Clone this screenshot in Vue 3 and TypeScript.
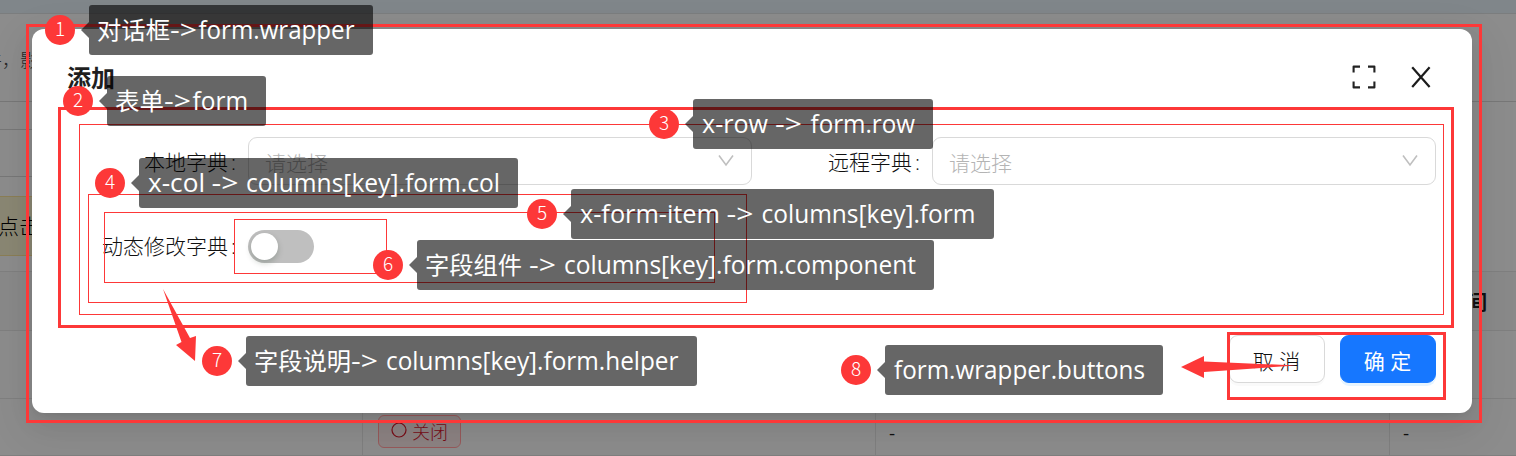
<script setup lang="ts">
interface Run {
  text: string
  x: number
  width: number
  cjk?: boolean
}
interface Callout {
  id: number
  x: number
  y: number
  width: number
  runs: Run[]
}
interface Frame {
  x: number
  y: number
  width: number
  height: number
  stroke: number
}

const frames: Frame[] = [
  { x: 26, y: 24, width: 1456, height: 399, stroke: 3 },
  { x: 58, y: 107, width: 1396, height: 221, stroke: 3 },
  { x: 79, y: 124, width: 1365, height: 191, stroke: 1 },
  { x: 88, y: 194, width: 659, height: 109, stroke: 1 },
  { x: 104, y: 212, width: 611, height: 71, stroke: 1 },
  { x: 234, y: 219, width: 153, height: 55, stroke: 1 },
  { x: 1227, y: 332, width: 219, height: 68, stroke: 3 },
]

const callouts: Callout[] = [
  { id: 1, x: 89, y: 5, width: 284, runs: [{ text: '对话框', x: 97, width: 73, cjk: true }, { text: '->', x: 170, width: 27 }, { text: 'form.wrapper', x: 198.5, width: 156 }] },
  { id: 2, x: 107, y: 76, width: 159, runs: [{ text: '表单', x: 115, width: 49, cjk: true }, { text: '->', x: 164, width: 27 }, { text: 'form', x: 192.5, width: 55.5 }] },
  { id: 3, x: 693, y: 99, width: 240, runs: [{ text: 'x-row', x: 702, width: 66 }, { text: '->', x: 775, width: 27 }, { text: 'form.row', x: 810.5, width: 104.5 }] },
  { id: 4, x: 139, y: 158, width: 379, runs: [{ text: 'x-col', x: 148, width: 57 }, { text: '->', x: 211.5, width: 27 }, { text: 'columns[key].form.col', x: 246, width: 254 }] },
  { id: 5, x: 571, y: 189, width: 423, runs: [{ text: 'x-form-item', x: 580, width: 140 }, { text: '->', x: 726.5, width: 27 }, { text: 'columns[key].form', x: 761.5, width: 214 }] },
  { id: 6, x: 417, y: 240, width: 517, runs: [{ text: '字段组件', x: 425, width: 97, cjk: true }, { text: '->', x: 529, width: 27 }, { text: 'columns[key].form.component', x: 564, width: 352 }] },
  { id: 7, x: 246, y: 336, width: 451, runs: [{ text: '字段说明', x: 254, width: 97, cjk: true }, { text: '->', x: 351, width: 27 }, { text: 'columns[key].form.helper', x: 386, width: 292.5 }] },
  { id: 8, x: 885, y: 345, width: 278, runs: [{ text: 'form.wrapper.buttons', x: 894, width: 251 }] },
]
</script>

<template>
  <div class="screen">
    <div class="page">
      <div class="topbar"></div>
      <div class="intro"><span>件，影响</span></div>
      <div class="band"></div>
      <div class="band tall"></div>
      <div class="notice-wrap"><div class="notice">点击</div></div>
      <div class="table-head"><b>时间</b></div>
      <div class="table-row blank"></div>
      <div class="table-row">
        <div class="cell first"></div>
        <div class="cell status">
          <span class="tag">
            <svg width="18" height="18" viewBox="0 0 18 18"><circle cx="9" cy="9" r="7" fill="none" stroke="currentColor" stroke-width="1.2" /></svg>
            <span>关闭</span>
          </span>
        </div>
        <div class="cell third">-</div>
        <div class="cell last">-</div>
      </div>
    </div>

    <div class="dialog">
      <header class="head">
        <h1>添加</h1>
        <div class="tools">
          <svg width="26" height="26" viewBox="0 0 26 26" fill="none" stroke="#222" stroke-width="2.1" stroke-linejoin="round">
            <path d="M2.6 8.600V2.6H9M17 2.6h6.4V8.600M2.6 17.4v6H9M17 23.4h6.4v-6" />
          </svg>
          <svg width="22" height="24" viewBox="0 0 22 24" fill="none" stroke="#1c1c1c" stroke-width="2.2">
            <path d="M2.2 2.2 19.6 22M19.6 2.2 2.2 22" />
          </svg>
        </div>
      </header>
      <div class="form">
        <div class="item">
          <label>本地字典<i>:</i></label>
          <div class="select">
            <span>请选择</span>
            <svg width="18" height="14" viewBox="0 0 18 14" fill="none" stroke="#bfbfbf" stroke-width="1.6"><path d="M2 1.5 9 11l7-9.5" /></svg>
          </div>
        </div>
        <div class="item">
          <label>远程字典<i>:</i></label>
          <div class="select">
            <span>请选择</span>
            <svg width="18" height="14" viewBox="0 0 18 14" fill="none" stroke="#bfbfbf" stroke-width="1.6"><path d="M2 1.5 9 11l7-9.5" /></svg>
          </div>
        </div>
        <div class="item">
          <label>动态修改字典<i>:</i></label>
          <div class="control"><div class="switch"><div class="knob"></div></div></div>
        </div>
      </div>
      <footer class="foot">
        <button class="btn">取 消</button>
        <button class="btn primary">确 定</button>
      </footer>
    </div>

    <svg class="notes" width="1516" height="456" viewBox="0 0 1516 456">
      <rect
        v-for="(f, i) in frames" :key="i" class="frame"
        :x="f.x + f.stroke / 2" :y="f.y + f.stroke / 2"
        :width="f.width - f.stroke" :height="f.height - f.stroke" :stroke-width="f.stroke"
      />
      <path class="arrow" d="M163 289 190 338 196 336 195 361 176 345 181.500 342Z" />
      <path class="arrow" d="M1296 365.500 1204 361.500V356L1181 367l23 11V372Z" />
      <g v-for="c in callouts" :key="c.id">
        <circle class="badge" :cx="c.x - 29" :cy="c.y + 25" r="15" />
        <text class="num" :x="c.x - 29" :y="c.y + 31">{{ c.id }}</text>
        <path class="bubble" :d="`M${c.x - 8} ${c.y + 25}l8 -8v-14q0 -3 3 -3h${c.width - 6}q3 0 3 3v44q0 3 -3 3h${6 - c.width}q-3 0 -3 -3v-14z`" />
        <text
          v-for="r in c.runs" :key="r.x" class="caption" :class="{ cjk: r.cjk }"
          :x="r.x" :y="c.y + 34" :textLength="r.width" lengthAdjust="spacingAndGlyphs"
        >{{ r.text }}</text>
      </g>
    </svg>
  </div>
</template>

<style>
body { margin: 0; overflow: hidden; }
</style>

<style scoped>
* { box-sizing: border-box; }
.screen {
  position: relative;
  width: 1516px;
  height: 456px;
  overflow: hidden;
  font-family: "Open Sans", "Noto Sans CJK SC", sans-serif;
  font-weight: 300;
  color: #101010;
}
.page { background: #8c8c8c; height: 456px; font-size: 19px; }
.topbar { height: 14px; background: #80868a; border-bottom: 1px solid #7b7d7e; }
.intro { height: 88px; border-bottom: 1px solid #777; line-height: 92px; color: #282828; white-space: nowrap; font-size: 18px; }
.intro span { margin-left: -16px; }
.band { width: 40px; height: 28px; border-bottom: 1px solid #777; }
.band.tall { height: 47px; }
.notice-wrap { height: 95px; padding-top: 19px; border-bottom: 1px solid #7f7f7f; }
.notice { width: 60px; height: 60px; background: #8a8773; border: 1px solid #8b7e55; border-left: 0; line-height: 59px; font-size: 21px; color: #000; margin-left: -2px; }
.table-head { height: 59px; background: #898989; border-bottom: 1px solid #7f7f7f; text-align: right; padding-right: 29px; line-height: 61px; font-size: 20px; }
.table-head b { font-weight: 700; color: #111; }
.table-row { display: flex; height: 57px; border-bottom: 1px solid #7f7f7f; }
.table-row.blank { height: 68px; }
.cell { height: 100%; border-right: 1px solid #7f7f7f; line-height: 68px; color: #111; font-weight: 400; }
.first { width: 363px; }
.status { width: 513px; padding: 16px 0 0 15px; }
.third { width: 514px; padding-left: 13px; }
.last { flex: 1; border: 0; padding-left: 13px; }
.tag { display: flex; align-items: center; gap: 4px; width: 83px; height: 33px; padding-left: 11px; border: 1px solid #97595a; border-radius: 6px; background: #8c8282; color: #780d17; font-size: 18px; line-height: 31px; font-weight: 300; }
.tag svg { margin-top: -3px; flex: none; }
.tag span { padding-top: 2px; }

.dialog {
  position: absolute;
  left: 32px;
  top: 29px;
  width: 1440px;
  height: 384px;
  border-radius: 12px;
  background: #fff;
  padding: 30px 36px;
  box-shadow: 0 9px 24px rgba(0, 0, 0, .08), 0 4px 9px -6px rgba(0, 0, 0, .12), 0 14px 42px 12px rgba(0, 0, 0, .05);
}
.head { display: flex; justify-content: space-between; height: 78px; }
h1 { margin: 0 0 0 -1px; font-size: 24px; line-height: 38px; font-weight: 700; color: #1f1f1f; }
.tools { display: flex; gap: 33px; padding: 5px 4px 0 0; }
.tools svg:last-child { margin-top: 1px; }
.form { display: grid; grid-template-columns: 684px 684px; row-gap: 36px; height: 198px; align-content: start; }
.item { display: flex; height: 48px; }
label { width: 180px; padding-right: 11px; text-align: right; line-height: 50px; font-size: 21px; white-space: nowrap; }
label i { font-style: normal; margin: 0 1px 0 3px; }
.select { display: flex; align-items: center; justify-content: space-between; width: 504px; height: 48px; border: 1px solid #d9d9d9; border-radius: 9px; padding: 0 16px; font-size: 21px; color: #b4b4b4; }
.select span { padding-top: 1px; }
.control { display: flex; align-items: center; }
.switch { width: 66px; height: 33px; border-radius: 17px; padding: 3px; background: #bfbfbf; margin-top: 2px; }
.knob { width: 27px; height: 27px; border-radius: 50%; background: #fff; box-shadow: 0 3px 6px rgba(0, 35, 11, .2); }
.foot { display: flex; justify-content: flex-end; gap: 15px; }
.btn { width: 96px; height: 48px; padding: 1px 1px 0 0; border: 1px solid #d9d9d9; border-radius: 9px; background: #fff; color: #101010; font: inherit; font-size: 21px; box-shadow: 0 3px 0 rgba(0, 0, 0, .02); }
.primary { border-color: #1677ff; background: #1677ff; color: #fff; font-weight: 400; box-shadow: 0 3px 0 rgba(5, 145, 255, .1); }

.notes { position: absolute; left: 0; top: 0; }
.frame { fill: none; stroke: #fd3838; }
.arrow { fill: #fd3838; }
.badge { fill: #fd3838; }
.num { fill: #fff; font-size: 19px; font-weight: 300; text-anchor: middle; font-family: "Noto Sans CJK SC", sans-serif; }
.bubble { fill: rgba(0, 0, 0, .6); }
.caption { fill: #fff; font-size: 25px; font-weight: 400; font-family: "Open Sans", "Noto Sans CJK SC", sans-serif; }
.caption.cjk { font-size: 24px; }
</style>
